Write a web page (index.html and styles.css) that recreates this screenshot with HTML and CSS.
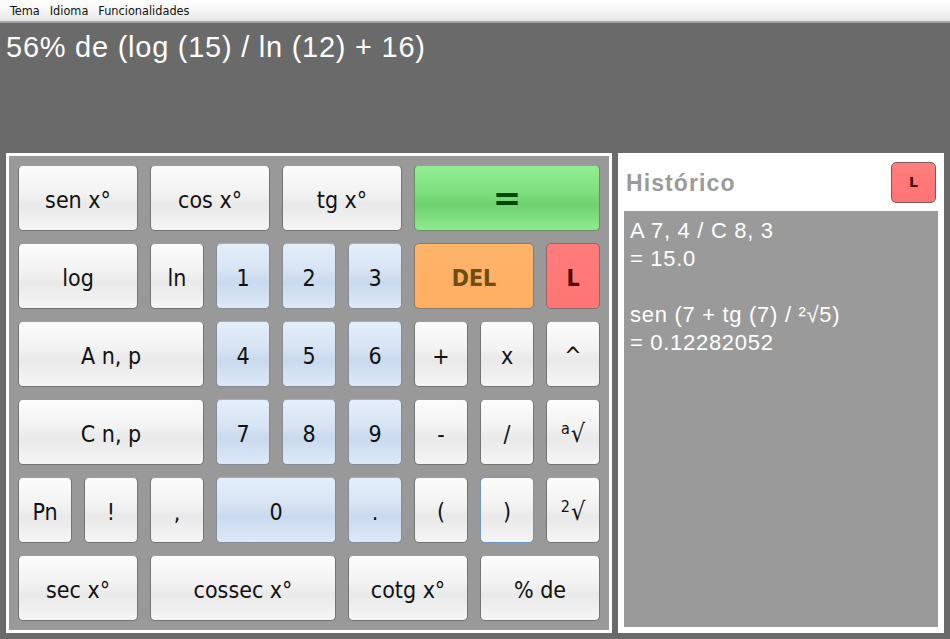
FILE: index.html
```html
<!DOCTYPE html>
<html>
<head>
<meta charset="utf-8">
<link rel="stylesheet" href="styles.css">
</head>
<body>
<div class="menubar">
  <span class="menu-item">Tema</span>
  <span class="menu-item">Idioma</span>
  <span class="menu-item">Funcionalidades</span>
</div>
<div class="display">56% de (log (15) / ln (12) + 16)</div>
<div class="main">
  <div class="keypad">
    <button class="btn span2">sen x°</button>
    <button class="btn span2">cos x°</button>
    <button class="btn span2">tg x°</button>
    <button class="btn span3 green">=</button>

    <button class="btn span2">log</button>
    <button class="btn">ln</button>
    <button class="btn blue">1</button>
    <button class="btn blue">2</button>
    <button class="btn blue">3</button>
    <button class="btn span2 orange">DEL</button>
    <button class="btn red">L</button>

    <button class="btn span3">A n, p</button>
    <button class="btn blue">4</button>
    <button class="btn blue">5</button>
    <button class="btn blue">6</button>
    <button class="btn">+</button>
    <button class="btn">x</button>
    <button class="btn">^</button>

    <button class="btn span3">C n, p</button>
    <button class="btn blue">7</button>
    <button class="btn blue">8</button>
    <button class="btn blue">9</button>
    <button class="btn">-</button>
    <button class="btn">/</button>
    <button class="btn root"><span class="idx">a</span>√</button>

    <button class="btn">Pn</button>
    <button class="btn">!</button>
    <button class="btn">,</button>
    <button class="btn span2 blue">0</button>
    <button class="btn blue">.</button>
    <button class="btn">(</button>
    <button class="btn focus">)</button>
    <button class="btn root"><span class="idx">2</span>√</button>

    <button class="btn span2">sec x°</button>
    <button class="btn span3">cossec x°</button>
    <button class="btn span2">cotg x°</button>
    <button class="btn span2">% de</button>
  </div>
  <div class="history">
    <div class="history-head">
      <span class="history-title">Histórico</span>
      <button class="clear-btn">L</button>
    </div>
    <div class="history-body">
      <div class="hline">A 7, 4 / C 8, 3</div>
      <div class="hline">= 15.0</div>
      <div class="hline">&nbsp;</div>
      <div class="hline">sen (7 + tg (7) / ²√5)</div>
      <div class="hline">= 0.12282052</div>
    </div>
  </div>
</div>
</body>
</html>
```
FILE: styles.css
```css
html, body {
  margin: 0;
  padding: 0;
}
body {
  width: 950px;
  height: 639px;
  overflow: hidden;
  background: #6a6a6a;
  font-family: "Liberation Sans", Arial, sans-serif;
}
.menubar {
  height: 21px;
  background: linear-gradient(to bottom, #ffffff 0%, #f6f6f6 50%, #e6e6e6 100%);
  border-bottom: 2px solid #a2a5aa;
  display: flex;
  align-items: center;
  padding-left: 10px;
  gap: 10px;
  font-family: "DejaVu Sans Condensed", "DejaVu Sans", sans-serif;
  font-size: 12.6px;
  color: #111;
}
.menu-item {
  line-height: 21px;
}
.display {
  height: 123px;
  padding: 7px 0 0 6px;
  color: #fff;
  font-size: 29px;
  line-height: 34px;
  letter-spacing: 0.75px;
  white-space: nowrap;
}
.main {
  display: flex;
  gap: 6px;
  padding: 0 6px;
  height: 480px;
}
.keypad {
  box-sizing: border-box;
  width: 606px;
  height: 480px;
  border: 3px solid #ffffff;
  background: #999999;
  padding: 9px;
  display: grid;
  grid-template-columns: repeat(9, 54px);
  grid-auto-rows: 66px;
  gap: 12px;
}
.btn {
  margin: 0;
  padding: 3px 0 0 0;
  border: 1px solid #747474;
  border-top-color: #9c9c9c;
  border-radius: 5px;
  background: linear-gradient(to bottom, #fcfcfc 0%, #f3f3f3 40%, #e9e9e9 60%, #f5f5f5 100%);
  font-family: "DejaVu Sans Condensed", "DejaVu Sans", sans-serif;
  font-size: 23px;
  color: #111;
  text-align: center;
  white-space: nowrap;
}
.span2 { grid-column: span 2; }
.span3 { grid-column: span 3; }
.blue {
  background: linear-gradient(to bottom, #e4eefb 0%, #d8e4f4 40%, #c9d9ee 60%, #dee9f8 100%);
  border-color: #868c96;
  border-top-color: #a8adb5;
}
.green {
  background: linear-gradient(to bottom, #92ee92 0%, #80e080 40%, #6fd16f 60%, #90eb90 100%);
  border-color: #6d8a6d;
  border-top-color: #8aa88a;
  color: #004700;
  font-family: "DejaVu Sans", sans-serif;
  font-weight: bold;
  font-size: 34px;
  padding-top: 0;
}
.orange {
  background: linear-gradient(to bottom, #ffb46a 0%, #ffae62 100%);
  border-color: #8a7a6a;
  color: #6e4c12;
  font-weight: bold;
}
.red {
  background: linear-gradient(to bottom, #ff7c7c 0%, #ff7474 100%);
  border-color: #8a6a6a;
  color: #5a0000;
  font-weight: bold;
}
.focus {
  border-color: #6f95c4;
}
.root {
  font-size: 25px;
}
.idx {
  font-size: 16px;
  vertical-align: 8px;
  margin-right: 1px;
}
.history {
  box-sizing: border-box;
  width: 326px;
  height: 480px;
  background: #ffffff;
  padding: 0 6px 6px 6px;
  display: flex;
  flex-direction: column;
}
.history-head {
  height: 58px;
  display: flex;
  align-items: center;
  justify-content: space-between;
  padding: 0 2px 0 2px;
}
.history-title {
  font-weight: bold;
  font-size: 23px;
  letter-spacing: 1.1px;
  color: #9a9a9a;
  padding-top: 2px;
}
.clear-btn {
  width: 45px;
  height: 41px;
  margin: 0;
  padding: 0;
  border: 1px solid #7a5a5a;
  border-radius: 5px;
  background: linear-gradient(to bottom, #ff7e7e 0%, #ff7373 100%);
  color: #4a0000;
  font-family: "DejaVu Sans", sans-serif;
  font-weight: bold;
  font-size: 14px;
}
.history-body {
  flex: 1;
  background: #9a9a9a;
  padding: 6px 0 0 6px;
  color: #ffffff;
  font-size: 22px;
  line-height: 28px;
  letter-spacing: 0.7px;
}
.hline {
  white-space: nowrap;
}
```
